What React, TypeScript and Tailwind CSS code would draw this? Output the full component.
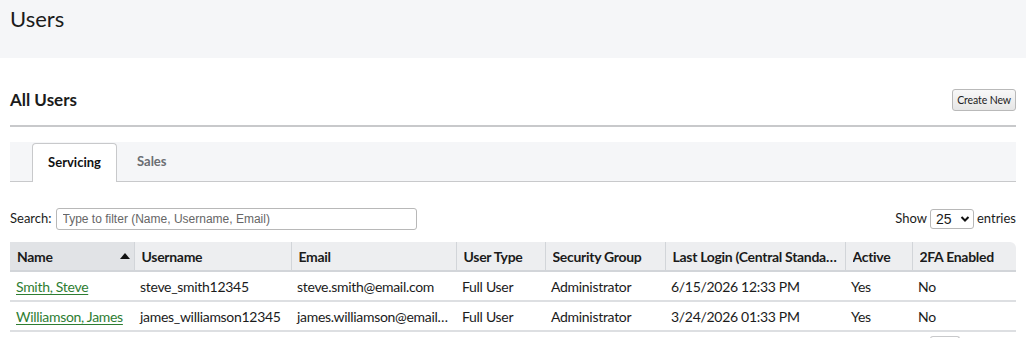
export default function App() {
  const cols = [
    { label: 'Name', w: 'w-[124px]' },
    { label: 'Username', w: 'w-[157px]' },
    { label: 'Email', w: 'w-[165px]' },
    { label: 'User Type', w: 'w-[89px]' },
    { label: 'Security Group', w: 'w-[120px]' },
    { label: 'Last Login (Central Standard Time)', w: 'w-[180px]' },
    { label: 'Active', w: 'w-[67px]' },
    { label: '2FA Enabled', w: 'w-[104px]' },
  ];

  const rows = [
    ['Smith, Steve', 'steve_smith12345', 'steve.smith@email.com', 'Full User', 'Administrator', '6/15/2026 12:33 PM', 'Yes', 'No'],
    ['Williamson, James', 'james_williamson12345', 'james.williamson@email.com', 'Full User', 'Administrator', '3/24/2026 01:33 PM', 'Yes', 'No'],
  ];

  return (
    <div className="min-h-[338px] bg-white font-['Lato',sans-serif] text-[#1b1b1b]">
      {/* page title band */}
      <div className="h-[58px] bg-[#f5f6f8] px-[10px] pt-[4px]">
        <h1 className="text-[22px] leading-[30px]">Users</h1>
      </div>

      <div className="px-[10px]">
        {/* section header */}
        <div className="flex h-[69px] items-end justify-between border-b-2 border-[#c8c9cb] pb-[14px]">
          <h2 className="text-[17px] font-bold leading-[22px]">All Users</h2>
          <button className="h-[22px] rounded-[3px] border border-[#b9b9b9] bg-gradient-to-b from-[#f8f8f8] to-[#e6e6e6] px-[4px] text-[10.5px] leading-[20px] tracking-[-0.1px] text-[#222]">
            Create New
          </button>
        </div>

        {/* tabs */}
        <div className="mt-[15px] flex h-[40px] items-end border-b border-[#c8c9cb] bg-[#f5f6f8] pl-[22px]">
          <div className="-mb-px flex h-[39px] w-[85px] items-center justify-center rounded-t-[4px] border border-b-0 border-[#c8c9cb] bg-white text-[13px] font-bold text-[#111]">
            Servicing
          </div>
          <div className="flex h-[39px] items-center px-[20px] text-[13px] font-bold text-[#6b6e73]">Sales</div>
        </div>

        {/* search / show */}
        <div className="mt-[26px] flex items-center justify-between text-[13px]">
          <label className="flex items-center gap-[4px]">
            Search:
            <input
              placeholder="Type to filter (Name, Username, Email)"
              className="h-[22px] w-[361px] rounded-[3px] border border-[#b8b8b8] px-[6px] font-['Liberation_Sans',sans-serif] text-[12px] placeholder:text-[#666] outline-none"
            />
          </label>
          <div className="flex items-center gap-[3px]">
            Show
            <div className="flex h-[20px] w-[44px] items-center justify-between rounded-[3px] border border-[#b8b8b8] pl-[5px] pr-[3px] font-['Liberation_Sans',sans-serif] text-[14px]">
              25
              <svg width="10" height="8" viewBox="0 0 10 8">
                <path d="M1.5 2 L5 5.5 L8.5 2" fill="none" stroke="#111" strokeWidth="2" />
              </svg>
            </div>
            entries
          </div>
        </div>

        {/* table */}
        <table className="mt-[12px] w-full table-fixed border-collapse text-[14px] tracking-[-0.3px]">
          <thead>
            <tr className="h-[29px] bg-[#edeef0] text-left">
              {cols.map((c, i) => (
                <th
                  key={c.label}
                  className={[
                    c.w,
                    'border-b-2 border-[#d2d5d9] px-[7px] font-bold',
                    i > 0 ? 'border-l border-l-[#d2d5d9]' : '',
                    i === 0 ? 'bg-[#e1e3e6]' : '',
                    i === cols.length - 1 ? 'rounded-tr-[6px]' : '',
                  ].join(' ')}
                >
                  {i === 0 ? (
                    <div className="flex items-center justify-between">
                      <span>{c.label}</span>
                      <svg width="10" height="6" viewBox="0 0 10 6" className="mr-[-3px]">
                        <path d="M0 6 L5 0 L10 6 Z" fill="#111" />
                      </svg>
                    </div>
                  ) : (
                    <div className="truncate">{c.label}</div>
                  )}
                </th>
              ))}
            </tr>
          </thead>
          <tbody>
            {rows.map((r) => (
              <tr key={r[0]} className="h-[30px] border-b-2 border-[#dddfe2]">
                {r.map((cell, i) => (
                  <td key={i} className="truncate px-[6px]">
                    {i === 0 ? (
                      <a href="#" className="text-[#2e7d32] underline underline-offset-2">
                        {cell}
                      </a>
                    ) : (
                      cell
                    )}
                  </td>
                ))}
              </tr>
            ))}
          </tbody>
        </table>

        {/* pagination peek */}
        <div className="mt-[4px] flex justify-end pr-[56px]">
          <div className="h-[6px] w-[30px] rounded-t-[3px] border border-b-0 border-[#c8c9cb]" />
        </div>
      </div>
    </div>
  );
}
